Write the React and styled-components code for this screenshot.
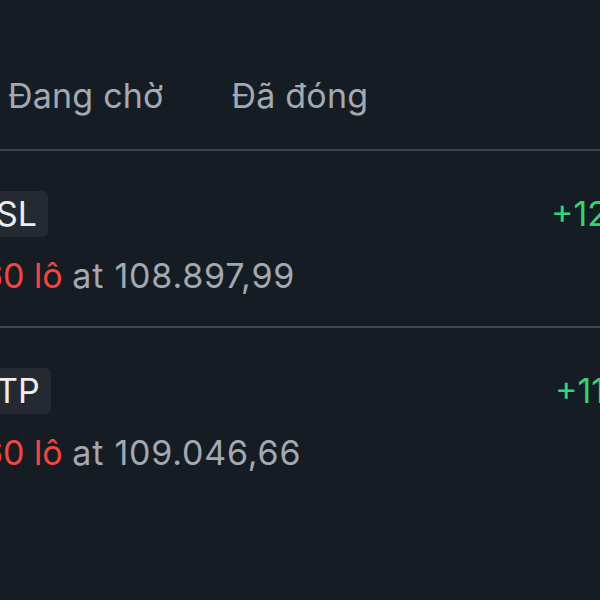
import React from "react";
import styled, { createGlobalStyle } from "styled-components";

const Global = createGlobalStyle`
  html, body { margin: 0; padding: 0; background: #161c24; overflow: hidden; }
  body { font-family: Inter, "Noto Sans", sans-serif; }
`;

const Viewport = styled.div`
  width: 600px;
  height: 600px;
  overflow: hidden;
  background: #161c24;
`;

const Screen = styled.div`
  width: 720px;
  margin-left: -18px;
  display: flex;
  flex-direction: column;
`;

const Tabs = styled.div`
  display: flex;
  gap: 68px;
  padding: 0 0 36px 26px;
  height: 151px;
  align-items: flex-end;
  box-sizing: border-box;
  border-bottom: 2px solid #40454c;
`;

const Tab = styled.div`
  font-size: 34px;
  color: #a3a9b1;
  line-height: 1;
  letter-spacing: 0.2px;
`;

const Row = styled.div`
  display: flex;
  justify-content: space-between;
  align-items: flex-start;
  padding: 40px 0 0;
  height: 177px;
  box-sizing: border-box;
  border-bottom: ${(p) => (p.$last ? "none" : "2px solid #40454c")};
`;

const Left = styled.div`
  display: flex;
  flex-direction: column;
  align-items: flex-start;
  gap: 19px;
`;

const Badge = styled.div`
  background: #252a32;
  color: #eceef0;
  font-size: 34px;
  line-height: 46px;
  height: 46px;
  padding: 0 11px 0 14px;
  border-radius: 6px;
`;

const Detail = styled.div`
  font-size: 34px;
  line-height: 40px;
  color: #a3a9b1;
`;

const Lots = styled.span`
  color: #f0473f;
`;

const Price = styled.span`
  letter-spacing: 0.8px;
`;

const Value = styled.div`
  font-size: 34px;
  line-height: 46px;
  color: #32d474;
  width: ${(p) => p.$width}px;
  text-align: left;
  white-space: nowrap;
`;

const rows = [
  { tag: "SL", price: "108.897,99", pnl: "+12,45 USD", width: 151 },
  { tag: "TP", price: "109.046,66", pnl: "+11,08 USD", width: 147 },
];

export default function App() {
  return (
    <Viewport>
      <Global />
      <Screen>
        <Tabs>
          <Tab>Đang chờ</Tab>
          <Tab>Đã đóng</Tab>
        </Tabs>
        {rows.map((r, i) => (
          <Row key={r.tag} $last={i === rows.length - 1}>
            <Left>
              <Badge>{r.tag}</Badge>
              <Detail>
                <Lots>60 lô</Lots> <Price>at {r.price}</Price>
              </Detail>
            </Left>
            <Value $width={r.width}>{r.pnl}</Value>
          </Row>
        ))}
      </Screen>
    </Viewport>
  );
}
